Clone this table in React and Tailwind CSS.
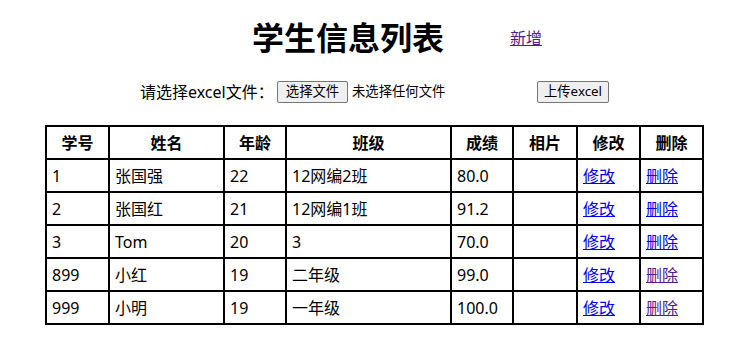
import React from 'react';

const students = [
  { id: '1', name: '张国强', age: '22', cls: '12网编2班', score: '80.0', visited: false },
  { id: '2', name: '张国红', age: '21', cls: '12网编1班', score: '91.2', visited: false },
  { id: '3', name: 'Tom', age: '20', cls: '3', score: '70.0', visited: false },
  { id: '899', name: '小红', age: '19', cls: '二年级', score: '99.0', visited: true },
  { id: '999', name: '小明', age: '19', cls: '一年级', score: '100.0', visited: true },
];

const headers = ['学号', '姓名', '年龄', '班级', '成绩', '相片', '修改', '删除'];
const widths = [63, 115, 62, 165, 62, 64, 63, 63];

const App = () => {
  return (
    <div
      className="w-[738px] h-[350px] bg-white text-black overflow-hidden"
      style={{ fontFamily: '"Noto Sans", "Noto Sans CJK SC", sans-serif' }}
    >
      {/* Title */}
      <div className="pt-[15px] pl-[252px] flex items-center h-[61px]">
        <h1 className="text-[32px] font-bold leading-[46px]">学生信息列表</h1>
        <a href="#" className="ml-[66px] text-[16px] text-[#551a8b] underline leading-[22px]">新增</a>
      </div>

      {/* Upload */}
      <div className="mt-[20px] pl-[140px] flex items-center h-[22px] text-[16px]">
        <span className="w-[137px] whitespace-nowrap">请选择excel文件：</span>
        <div className="w-[260px] flex items-center">
          <button className="w-[71px] h-[22px] bg-[#efefef] border border-[#767676] rounded-[2px] text-[13.33px] leading-none">选择文件</button>
          <span className="ml-[4px] text-[13.33px]">未选择任何文件</span>
        </div>
        <button className="w-[72px] h-[22px] bg-[#efefef] border border-[#767676] rounded-[2px] text-[13.33px] leading-none">上传excel</button>
      </div>

      {/* Table */}
      <table className="mt-[22px] ml-[45px] border-collapse table-fixed w-[657px] text-[16px]">
        <colgroup>
          {widths.map((w, i) => (
            <col key={i} style={{ width: w }} />
          ))}
        </colgroup>
        <thead>
          <tr className="h-[33px]">
            {headers.map((h) => (
              <th key={h} className="border-2 border-black font-bold text-center align-middle p-0">{h}</th>
            ))}
          </tr>
        </thead>
        <tbody>
          {students.map((s) => (
            <tr key={s.id} className="h-[33px]">
              <td className="border-2 border-black pl-[5px] align-middle">{s.id}</td>
              <td className="border-2 border-black pl-[5px] align-middle">{s.name}</td>
              <td className="border-2 border-black pl-[5px] align-middle">{s.age}</td>
              <td className="border-2 border-black pl-[5px] align-middle">{s.cls}</td>
              <td className="border-2 border-black pl-[5px] align-middle">{s.score}</td>
              <td className="border-2 border-black"></td>
              <td className="border-2 border-black pl-[5px] align-middle">
                <a href="#" className="text-[#0000ee] underline">修改</a>
              </td>
              <td className="border-2 border-black pl-[5px] align-middle">
                <a href="#" className={s.visited ? 'text-[#551a8b] underline' : 'text-[#0000ee] underline'}>删除</a>
              </td>
            </tr>
          ))}
        </tbody>
      </table>
    </div>
  );
};

export default App;
